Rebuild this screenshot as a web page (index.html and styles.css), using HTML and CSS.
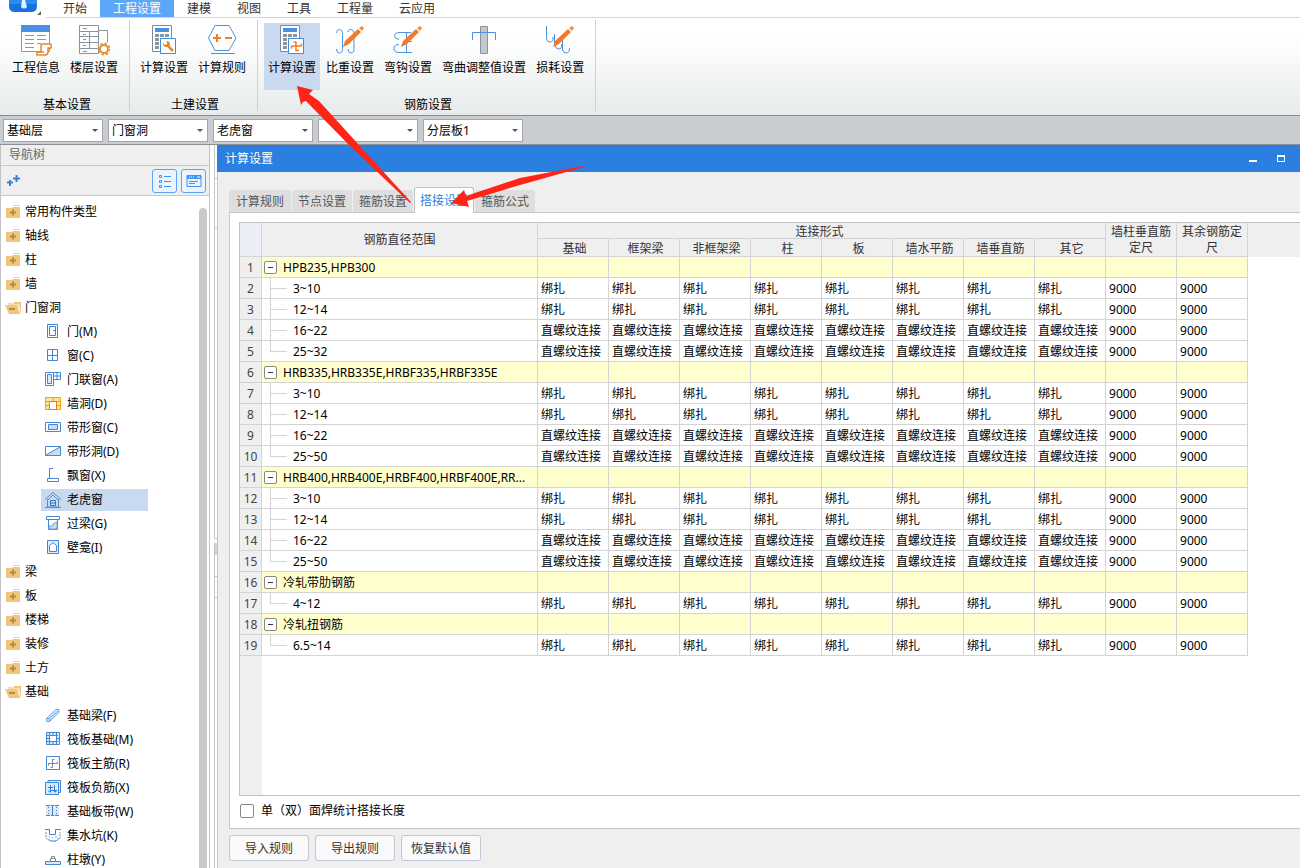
FILE: index.html
```html
<!DOCTYPE html>
<html lang="zh-CN">
<head>
<meta charset="utf-8">
<title>计算设置</title>
<link rel="stylesheet" href="styles.css">
</head>
<body>
<svg class="defs" aria-hidden="true">
  <symbol id="folder" viewBox="0 0 16 16"><path d="M8 2l1-1h5l1 1z" fill="#efce8e"/><path d="M1 4h6l1-1h7v11H1z" fill="#eec67c"/><path d="M8 5.500v6M5 8.500h6" stroke="#b98c3c" stroke-width="2"/></symbol>
  <symbol id="folder-open" viewBox="0 0 16 16"><path d="M3 3h13v10l-2-6H3z" fill="#f6dfae"/><path d="M9 2h7v11h-1V4H9z" fill="#eec67c"/><path d="M0 5h12l3 9H4z" fill="#eec67c"/><path d="M4 9h6" stroke="#b98c3c" stroke-width="2"/></symbol>
  <symbol id="calc" viewBox="0 0 32 32"><path d="M4.500 1.500h19v26h-19z" fill="#fff" stroke="#7e8a97"/><path d="M7 4h14v4H7z" fill="#4a90e0"/><path d="M7 10h4v3H7zm5 0h4v3h-4zm5 0h4v3h-4zM7 14h4v3H7zm0 4h4v3H7zm0 4h4v3H7z" fill="#8894a0"/><path d="M12.500 14.500h15v15h-15z" fill="#fff" stroke="#3f8be0"/></symbol>
  <symbol id="pencil" viewBox="0 0 32 32"><path d="M9 23l2-6L24 5l3 3-12 12z" fill="#f07c28"/><path d="M25 4l3-2 2 2-2 3z" fill="#e59146"/></symbol>
</svg>

<header class="menubar">
  <div class="logo"><svg width="44" height="17" viewBox="0 0 44 17"><path d="M9 0h28v6q0 6-6 6H15q-6 0-6-6z" fill="#1673dc"/><path d="M9 0h28v4H9z" fill="#2c8cec"/><path d="M22 0h3l2 7q-3 3-6 0z" fill="#e2f1ff"/><path d="M41 11v4h-4z" fill="#666"/></svg></div>
  <nav class="menu">
    <a href="#">开始</a><a href="#" class="active">工程设置</a><a href="#">建模</a><a href="#">视图</a><a href="#">工具</a><a href="#">工程量</a><a href="#">云应用</a>
  </nav>
</header>

<section class="ribbon">
  <div class="group">
    <div class="tools">
      <button class="tool"><svg width="32" height="32"><path d="M1.500 1.500h28v26h-28z" fill="#fff" stroke="#8b97a4"/><path d="M1 1h29v7H1z" fill="#4a90e4"/><path d="M5 11.500h9m3 0h9M5 15.500h9m3 0h9M5 19.500h9m3 0h4M5 23.500h9" stroke="#8b97a4"/><path d="M22 20h9v4h-3v4q0 3-3 3h-8v-3h4v-6q0-2 2-2z" fill="#fff" stroke="#e68a2e" stroke-width="1.500"/><path d="M17 28h7" stroke="#e68a2e" stroke-width="1.500"/></svg>工程信息</button>
      <button class="tool"><svg width="32" height="32"><path d="M20 6.500h9.500v12M1.500 1.500h19v28h-19zM1.500 7.500h19M1.500 12.500h19M1.500 18.500h19M1.500 24.500h19M11.500 7v17" fill="none" stroke="#8894a0"/><path d="M5 4.500h4M5 10.500h3M5 15.500h3M5 21.500h3M5 27.500h4" stroke="#8894a0"/><circle cx="26" cy="25" r="4" fill="#fff" stroke="#e6913c" stroke-width="2"/><circle cx="26" cy="25" r="5.500" fill="none" stroke="#e6913c" stroke-width="2" stroke-dasharray="2.300 2"/></svg>楼层设置</button>
    </div>
    <h2>基本设置</h2>
  </div>
  <div class="group">
    <div class="tools">
      <button class="tool"><svg width="32" height="32"><use href="#calc"/><path d="M19 21l6 6" stroke="#e68a2e" stroke-width="2.500"/><path d="M15 19l2 2 2-1v-2l-1-1h2l2 2v2l-2 2h-3l-2-2z" fill="#e68a2e"/></svg>计算设置</button>
      <button class="tool"><svg width="32" height="32"><path d="M2.500 14L9 1.500h14L30 14l-7 12.500H9z" fill="#fff" stroke="#4a90e4"/><path d="M7 14h8M11 10v8M19 14h7" stroke="#f07c28" stroke-width="2"/><path d="M5 29.500h24" stroke="#4a90e4"/></svg>计算规则</button>
    </div>
    <h2>土建设置</h2>
  </div>
  <div class="group">
    <div class="tools">
      <button class="tool active"><svg width="32" height="32"><use href="#calc"/><path d="M20 17.500v9h3M15.500 22h10M15.500 22v2.500M25.500 22v-2.500M20 18h-2.500" stroke="#f07c28" stroke-width="1.500" fill="none"/></svg>计算设置</button>
      <button class="tool"><svg width="32" height="32"><path d="M2.500 9q0-3.500 3-3.500t3 5v14q0 4.500-3 4.500t-3-4M13.500 8q1-2.500 3-2.500 3.500 0 3.500 5v14q0 4.500-3 4.500t-3-4" fill="none" stroke="#4a90e4"/><use href="#pencil"/></svg>比重设置</button>
      <button class="tool"><svg width="32" height="32"><path d="M19 8.500H8q-5 0-5.500 3t4.500 4M18 28.500H7q-5 0-5-4t5-4M14.500 8v20M12 17.500h8M12 28.500h8" fill="none" stroke="#4a90e4"/><use href="#pencil"/></svg>弯钩设置</button>
      <button class="tool"><svg width="32" height="32"><path d="M12.500 2.500h7v27h-7z" fill="#c3c8cd" stroke="#8b949e"/><path d="M4.500 16V8.500h23V16" fill="none" stroke="#4a90e4"/></svg>弯曲调整值设置</button>
      <button class="tool"><svg width="32" height="32"><path d="M2.500 2v12q0 4 3.500 4t3-5M10.500 10v10q1 5 4 5 4 0 3-5M18.500 16v10q1 3 4 3t3-5" fill="none" stroke="#4a90e4"/><use href="#pencil"/></svg>损耗设置</button>
    </div>
    <h2>钢筋设置</h2>
  </div>
</section>

<section class="filters">
  <label><select aria-label="楼层"><option>基础层</option></select></label>
  <label><select aria-label="构件类别"><option>门窗洞</option></select></label>
  <label><select aria-label="构件"><option>老虎窗</option></select></label>
  <label><select aria-label="名称"><option></option></select></label>
  <label><select aria-label="分层"><option>分层板1</option></select></label>
</section>

<main class="workspace">
  <aside class="sidebar">
    <h2 class="side-title">导航树</h2>
    <div class="side-tools">
      <button class="plain" aria-label="展开"><svg width="13" height="12"><path d="M0 7.500h6M3 5v6M6 3.500h7M9.500 0v7" stroke="#3b82d6" stroke-width="2"/></svg></button>
      <div class="views">
        <button class="view" aria-label="列表"><svg width="14" height="14"><path d="M1.500 1.500h2v2h-2zm0 5h2v2h-2zm0 5h2v2h-2zM6 2.500h7M6 7.500h7M6 12.500h7" fill="none" stroke="#3f95f0"/></svg></button>
        <button class="view" aria-label="卡片"><svg width="16" height="14"><path d="M1 1.500h14v11H1z" fill="none" stroke="#3f95f0"/><path d="M1 1h14v4H1z" fill="#3f95f0"/><path d="M3 3h1m1 0h1m1 0h1m3 0h3" stroke="#fff"/><path d="M3 7.500h9M3 9.500h6" stroke="#3f95f0"/></svg></button>
      </div>
    </div>
    <div class="side-body">
      <ul class="tree">
        <li><a href="#"><svg><use href="#folder"/></svg>常用构件类型</a></li>
        <li><a href="#"><svg><use href="#folder"/></svg>轴线</a></li>
        <li><a href="#"><svg><use href="#folder"/></svg>柱</a></li>
        <li><a href="#"><svg><use href="#folder"/></svg>墙</a></li>
        <li><a href="#"><svg><use href="#folder-open"/></svg>门窗洞</a>
          <ul>
            <li><a href="#"><svg><path d="M2.500.500h10v13h-10z"/><path d="M4.500 2.500h6v9h-6z"/><path d="M8 6.500h2"/></svg>门(M)</a></li>
            <li><a href="#"><svg><path d="M2.500 1.500h10v11h-10zM7.500 1v11M2 7.500h11"/></svg>窗(C)</a></li>
            <li><a href="#"><svg><path d="M.5.500h8v13h-8z"/><path d="M2.500 2.500h4v9h-4z" fill="#dce8f8"/><path d="M8.500.500h7v7h-7M12 1v7M8 4h8"/></svg>门联窗(A)</a></li>
            <li><a href="#"><svg><path d="M.5 1.500h15v12H.5z" fill="#fde392" stroke="#f2a900"/><path d="M1 5.500h14M1 9.500h14M8 2v3" stroke="#f2a900"/><path d="M4.500 5.500h7v8h-7z" fill="#fff" stroke="#e87b28"/></svg>墙洞(D)</a></li>
            <li><a href="#"><svg><path d="M.5 2.500h15v9H.5z"/><path d="M3.500 4.500h9v5h-9z" fill="#c8ddf6"/></svg>带形窗(C)</a></li>
            <li><a href="#"><svg><path d="M15 3v8H1z" fill="#c8ddf6" stroke="none"/><path d="M.5 2.500h15v9H.5zM1 11L15 3"/></svg>带形洞(D)</a></li>
            <li><a href="#"><svg><path d="M8 .5H4.500v10M2.500 10.500h11v3h-11z"/></svg>飘窗(X)</a></li>
            <li><a href="#" class="selected"><svg><path d="M0 7.500L8 .5l8 7M2.500 7v8h11V7M0 15.500h16" stroke="#5e8db8"/><path d="M3 8l5-5 5 5" stroke="#5e8db8"/><path d="M5.500 8.500h5v5h-5zM6 11h4" stroke="#2579d6"/></svg>老虎窗</a></li>
            <li><a href="#"><svg><path d="M1.500.500h13v3h-13zM3.500 4v9.500h9V4"/><path d="M4 13v-3h4V8l4-2v7z" fill="#c8ddf6" stroke="#6aa3e3"/></svg>过梁(G)</a></li>
            <li><a href="#"><svg><path d="M2.500.500h11v13h-11z" fill="#e5eefb"/><path d="M4.500 11.500v-6l3.500-3 3.500 3v6z" fill="#fff"/></svg>壁龛(I)</a></li>
          </ul>
        </li>
        <li><a href="#"><svg><use href="#folder"/></svg>梁</a></li>
        <li><a href="#"><svg><use href="#folder"/></svg>板</a></li>
        <li><a href="#"><svg><use href="#folder"/></svg>楼梯</a></li>
        <li><a href="#"><svg><use href="#folder"/></svg>装修</a></li>
        <li><a href="#"><svg><use href="#folder"/></svg>土方</a></li>
        <li><a href="#"><svg><use href="#folder-open"/></svg>基础</a>
          <ul>
            <li><a href="#"><svg><path d="M1.500 10.500L11 1.500h3v3l-9.500 9h-3z" fill="#dce8f8" stroke="#6aa3e3"/><path d="M1.500 10.500h3v3M4.500 10.500L13 3" stroke="#6aa3e3"/></svg>基础梁(F)</a></li>
            <li><a href="#"><svg><path d="M1.500.500h13v12h-13z" fill="#dce8f8"/><path d="M4.500 3.500h7v6h-7z" fill="#fff"/><path d="M2 3.500h12M2 9.500h12M4.500 1v11M11.500 1v11M8 1v2m0 7v2M2 6.500h2m8 0h2" stroke-dasharray="2 1"/></svg>筏板基础(M)</a></li>
            <li><a href="#"><svg><path d="M1.500.500h13v13h-13z"/><path d="M7.500 3v8.500M4 7.500h9M7.500 3.500h2M7.500 11.500h-2M3.500 7v2.500M12.500 8V5.500" stroke="#7d8b98"/></svg>筏板主筋(R)</a></li>
            <li><a href="#"><svg><path d="M3 2.500V.500h12.500v12h-2M.5 2.500h13v12H.5z" fill="#dce8f8"/><path d="M5.500 5v7q-2 0-2-1.500M9.500 5v7M3 7.500h5M6 10.500h6M9.500 12q2 0 2-1.500" stroke="#2d7edb"/></svg>筏板负筋(X)</a></li>
            <li><a href="#"><svg><path d="M1 1h13v11H1z" fill="#dce8f8" stroke="none"/><path d="M1 1.500h4m1 0h3m1 0h4M1 11.500h4m1 0h3m1 0h4M7.500 1v10"/><path d="M3.500 3v7M11.500 3v7" stroke-dasharray="1 2"/></svg>基础板带(W)</a></li>
            <li><a href="#"><svg><path d="M0 1.500h4.500v5h6v-5H16"/><path d="M1 4v6l4 3h6l4-3V4" stroke-dasharray="2 1" stroke="#7d8b98"/><path d="M3 11l3 2h5l3-3M4 9h1m2 1h1m2-1h2" stroke="#6aa3e3"/></svg>集水坑(K)</a></li>
            <li><a href="#"><svg><path d="M.5 9.500h15v3H.5z" fill="#dce8f8"/><path d="M5.500 9V6.500h5V9M6.500 6V4.500h3V6" stroke="#7d8b98"/></svg>柱墩(Y)</a></li>
          </ul>
        </li>
      </ul>
      <div class="scrollbar"></div>
    </div>
  </aside>
  <div class="gutter"></div>

  <section class="dialog">
    <header class="dialog-title">
      <h1>计算设置</h1>
      <div class="window-buttons">
        <button aria-label="最小化"><svg width="8" height="8"><path d="M0 6h8" stroke="#fff" stroke-width="2"/></svg></button>
        <button aria-label="最大化"><svg width="8" height="8"><path d="M.5 1v5.500h7V1" fill="none" stroke="#fff"/><path d="M0 1h8" stroke="#fff" stroke-width="2"/></svg></button>
      </div>
    </header>
    <div class="dialog-body">
      <div class="tabs" role="tablist">
        <button role="tab">计算规则</button><button role="tab">节点设置</button><button role="tab">箍筋设置</button><button role="tab" class="active" aria-selected="true">搭接设置</button><button role="tab">箍筋公式</button>
      </div>
      <div class="panel">
        <div class="grid">
          <table>
            <colgroup><col class="c-num"><col class="c-name"><col class="c-val" span="10"><col></colgroup>
            <thead>
              <tr class="upper"><th rowspan="2" class="corner"><th rowspan="2">钢筋直径范围<th colspan="8" class="short">连接形式<th rowspan="2">墙柱垂直筋定尺<th rowspan="2">其余钢筋定尺<th rowspan="2" class="filler">
              <tr class="lower"><th>基础<th>框架梁<th>非框架梁<th>柱<th>板<th>墙水平筋<th>墙垂直筋<th>其它
            </thead>
            <tbody>
              <tr class="head"><th>1<td><button class="toggle" aria-label="折叠"></button>HPB235,HPB300<td><td><td><td><td><td><td><td><td><td>
              <tr><th>2<td class="leaf">3~10<td>绑扎<td>绑扎<td>绑扎<td>绑扎<td>绑扎<td>绑扎<td>绑扎<td>绑扎<td>9000<td>9000
              <tr><th>3<td class="leaf">12~14<td>绑扎<td>绑扎<td>绑扎<td>绑扎<td>绑扎<td>绑扎<td>绑扎<td>绑扎<td>9000<td>9000
              <tr><th>4<td class="leaf">16~22<td>直螺纹连接<td>直螺纹连接<td>直螺纹连接<td>直螺纹连接<td>直螺纹连接<td>直螺纹连接<td>直螺纹连接<td>直螺纹连接<td>9000<td>9000
              <tr><th>5<td class="leaf last">25~32<td>直螺纹连接<td>直螺纹连接<td>直螺纹连接<td>直螺纹连接<td>直螺纹连接<td>直螺纹连接<td>直螺纹连接<td>直螺纹连接<td>9000<td>9000
              <tr class="head"><th>6<td><button class="toggle" aria-label="折叠"></button>HRB335,HRB335E,HRBF335,HRBF335E<td><td><td><td><td><td><td><td><td><td>
              <tr><th>7<td class="leaf">3~10<td>绑扎<td>绑扎<td>绑扎<td>绑扎<td>绑扎<td>绑扎<td>绑扎<td>绑扎<td>9000<td>9000
              <tr><th>8<td class="leaf">12~14<td>绑扎<td>绑扎<td>绑扎<td>绑扎<td>绑扎<td>绑扎<td>绑扎<td>绑扎<td>9000<td>9000
              <tr><th>9<td class="leaf">16~22<td>直螺纹连接<td>直螺纹连接<td>直螺纹连接<td>直螺纹连接<td>直螺纹连接<td>直螺纹连接<td>直螺纹连接<td>直螺纹连接<td>9000<td>9000
              <tr><th>10<td class="leaf last">25~50<td>直螺纹连接<td>直螺纹连接<td>直螺纹连接<td>直螺纹连接<td>直螺纹连接<td>直螺纹连接<td>直螺纹连接<td>直螺纹连接<td>9000<td>9000
              <tr class="head"><th>11<td><button class="toggle" aria-label="折叠"></button>HRB400,HRB400E,HRBF400,HRBF400E,RR...<td><td><td><td><td><td><td><td><td><td>
              <tr><th>12<td class="leaf">3~10<td>绑扎<td>绑扎<td>绑扎<td>绑扎<td>绑扎<td>绑扎<td>绑扎<td>绑扎<td>9000<td>9000
              <tr><th>13<td class="leaf">12~14<td>绑扎<td>绑扎<td>绑扎<td>绑扎<td>绑扎<td>绑扎<td>绑扎<td>绑扎<td>9000<td>9000
              <tr><th>14<td class="leaf">16~22<td>直螺纹连接<td>直螺纹连接<td>直螺纹连接<td>直螺纹连接<td>直螺纹连接<td>直螺纹连接<td>直螺纹连接<td>直螺纹连接<td>9000<td>9000
              <tr><th>15<td class="leaf last">25~50<td>直螺纹连接<td>直螺纹连接<td>直螺纹连接<td>直螺纹连接<td>直螺纹连接<td>直螺纹连接<td>直螺纹连接<td>直螺纹连接<td>9000<td>9000
              <tr class="head"><th>16<td><button class="toggle" aria-label="折叠"></button>冷轧带肋钢筋<td><td><td><td><td><td><td><td><td><td>
              <tr><th>17<td class="leaf last">4~12<td>绑扎<td>绑扎<td>绑扎<td>绑扎<td>绑扎<td>绑扎<td>绑扎<td>绑扎<td>9000<td>9000
              <tr class="head"><th>18<td><button class="toggle" aria-label="折叠"></button>冷轧扭钢筋<td><td><td><td><td><td><td><td><td><td>
              <tr><th>19<td class="leaf last">6.5~14<td>绑扎<td>绑扎<td>绑扎<td>绑扎<td>绑扎<td>绑扎<td>绑扎<td>绑扎<td>9000<td>9000
            </tbody>
          </table>
        </div>
        <label class="option"><input type="checkbox">单（双）面焊统计搭接长度</label>
      </div>
      <footer class="actions">
        <button>导入规则</button><button>导出规则</button><button>恢复默认值</button>
      </footer>
    </div>
  </section>
</main>

<svg class="annotations" width="600" height="220" aria-hidden="true"><path d="M297 86l16 4-4 4 10 7 40 44 52 57-1 1-61-58-43-44-3 1-2 3z"/><path d="M451 203l13-13 2 6 54-18 63-12 1 1-64 18-53 16 2 6z"/></svg>
</body>
</html>
```

FILE: styles.css
```css
* { box-sizing: border-box; }

body {
  display: flex;
  flex-direction: column;
  height: 100vh;
  margin: 0;
  overflow: hidden;
  background: #fff;
  color: #000;
  font: 12px/16px "Noto Sans", "Noto Sans CJK SC", sans-serif;
}

h1, h2 { margin: 0; font-size: 12px; font-weight: 400; }
a { color: inherit; text-decoration: none; }
button, select, input { font: inherit; color: inherit; }
button { padding: 0; border: 0; background: none; white-space: nowrap; }
svg { display: block; flex: none; }
.defs { display: none; }

.menubar { display: flex; flex: none; height: 18px; }
.logo { width: 46px; }
.menu { display: flex; flex: 1; padding-left: 4px; border-bottom: 1px solid #d2d4d6; color: #333; }
.menu a { height: 17px; padding: 1px 13px 0; }
.menu .active { background: #5ba8f8; color: #fff; }

.ribbon {
  display: flex;
  flex: none;
  height: 98px;
  padding: 2px 0 4px;
  border-bottom: 1px solid #878c92;
  background: linear-gradient(#fff 20%, #e7ebeb);
}
.group {
  display: flex;
  flex-direction: column;
  justify-content: space-between;
  padding: 3px 7px 0 6px;
  border-right: 1px solid #cfd2d4;
}
.group:first-child { padding-left: 8px; }
.group h2 { padding-left: 4px; line-height: 12px; text-align: center; }
.tools { display: flex; gap: 2px; }
.tool {
  display: flex;
  flex-direction: column;
  align-items: center;
  gap: 4px;
  height: 67px;
  padding: 1px 4px 0;
}
.tool.active { background: #c9d9ef; }

.filters {
  display: flex;
  flex: none;
  gap: 5px;
  height: 29px;
  padding: 3px 3px 2px;
  border-bottom: 1px solid #8c9095;
  background: #c9ccd1;
}
.filters label { position: relative; width: 100px; }
.filters label::after {
  content: "";
  position: absolute;
  right: 5px;
  top: 10px;
  border: 3px solid transparent;
  border-top-color: #555;
  border-bottom: 0;
  pointer-events: none;
}
.filters select {
  width: 100%;
  height: 23px;
  padding: 0 3px;
  border: 1px solid #a4a6a9;
  border-radius: 0;
  background: #fff;
  appearance: none;
}

.workspace { display: flex; flex: 1; min-height: 0; }

.sidebar {
  display: flex;
  flex-direction: column;
  flex: none;
  width: 210px;
  border: solid #c0c3c8;
  border-width: 0 1px;
}
.side-title {
  height: 21px;
  padding: 2px 8px;
  border-bottom: 1px solid #c6c8cc;
  background: #efefef;
  color: #666;
}
.side-tools {
  display: flex;
  justify-content: space-between;
  height: 30px;
  padding: 3px 3px 0 6px;
  border-bottom: 1px solid #c6c8cc;
  background: #efefef;
}
.plain { display: flex; padding-top: 6px; }
.views { display: flex; gap: 4px; }
.view {
  display: grid;
  place-items: center;
  width: 25px;
  height: 24px;
  border: 1px solid #58a5f5;
  border-radius: 3px;
  background: #eaf3fe;
}
.side-body { display: flex; flex: 1; min-height: 0; overflow: hidden; }
.scrollbar { flex: none; width: 8px; margin: 12px 2px 0 0; border-radius: 4px 4px 0 0; background: #c9c9c9; }
.tree { flex: 1; padding: 4px 0 0 4px; }
.tree, .tree ul { margin: 0; list-style: none; }
.tree ul { padding: 0 0 0 36px; }
.tree a { display: flex; align-items: center; gap: 4px; height: 24px; }
.tree svg { width: 16px; height: 16px; fill: none; stroke: #3f86d8; }
.tree use { stroke: none; }
.tree ul a { gap: 6px; width: 107px; height: 22px; margin: 1px 0; padding: 0 4px; white-space: nowrap; }
.tree ul li { display: flow-root; }
.tree .selected { background: #c9d9ef; }

.gutter {
  flex: none;
  width: 7px;
  background:
    linear-gradient(#c4c6ca, #c4c6ca) 4px 0 / 1px 394px no-repeat,
    linear-gradient(#c4c6ca, #c4c6ca) 4px 398px / 1px 100% no-repeat,
    linear-gradient(#c4c6ca, #c4c6ca) 4px 393px / 3px 1px no-repeat,
    linear-gradient(#d0d2d8, #d0d2d8) 4px 398px / 3px 12px no-repeat,
    linear-gradient(#c4c6ca, #c4c6ca) 4px 33px / 3px 1px no-repeat,
    linear-gradient(#c4c6ca, #c4c6ca) 4px 82px / 3px 1px no-repeat,
    linear-gradient(#c4c6ca, #c4c6ca) 4px 431px / 3px 1px no-repeat,
    linear-gradient(#c4c6ca, #c4c6ca) 4px 452px / 3px 1px no-repeat,
    #fff;
}

.dialog { display: flex; flex: 1; flex-direction: column; min-width: 0; background: #efefef; }
.dialog-title {
  display: flex;
  justify-content: space-between;
  align-items: center;
  height: 27px;
  padding: 0 15px 0 8px;
  background: #2b7fe1;
  color: #fff;
}
.window-buttons { display: flex; gap: 20px; }
.dialog-body {
  display: flex;
  flex: 1;
  flex-direction: column;
  min-height: 0;
  padding: 15px 0 0 11px;
  border-left: 1px solid #c3c5c8;
}
.tabs { display: flex; align-items: flex-end; flex: none; gap: 1px; height: 25px; }
.tabs button { height: 22px; padding: 2px 6px 0; border-radius: 3px 3px 0 0; background: #dedede; color: #555; }
.tabs button:first-child { padding: 2px 7px 0; }
.tabs .active {
  height: 26px;
  margin-bottom: -1px;
  padding: 0 5px;
  border: 1px solid #bfc3c9;
  border-bottom: 0;
  background: #fff;
  color: #2b7fe1;
  z-index: 1;
}
.panel {
  display: flex;
  flex: 1;
  flex-direction: column;
  min-height: 0;
  padding: 9px 0 0 9px;
  border: solid #c3c6ca;
  border-width: 1px 0 1px 1px;
  background: #fff;
}
.grid {
  flex: 1;
  min-height: 0;
  overflow: hidden;
  border: solid #bfc2c6;
  border-width: 1px 0 1px 1px;
  background: linear-gradient(to right, #efefef 22px, #fff 22px);
}
table { width: 100%; border-collapse: separate; border-spacing: 0; table-layout: fixed; }
.c-num { width: 22px; }
.c-name { width: 276px; }
.c-val { width: 71px; }
th, td {
  height: 21px;
  padding: 2px 3px 0;
  border: solid #d4d4d4;
  border-width: 0 1px 1px 0;
  font-weight: 400;
  text-align: left;
  white-space: nowrap;
}
th { background: #efefef; color: #333; text-align: center; }
thead th { padding: 1px 4px 0; white-space: normal; }
.upper th { height: 34px; }
.upper .short { height: 16px; padding: 2px 6px 0 2px; line-height: 13px; }
.lower th { height: 18px; padding: 2px 2px 0 5px; line-height: 15px; }
tbody th { padding: 2px 0 0; color: #444; }
thead .corner { background: #ebeff5; }
thead .filler { border: 0; }
.head td { background: #ffffcd; }
td.leaf {
  padding-left: 31px;
  background:
    linear-gradient(#d4d4d4, #d4d4d4) 8px 0 / 1px 100% no-repeat,
    linear-gradient(#d4d4d4, #d4d4d4) 8px 10px / 17px 1px no-repeat;
}
td.last {
  background:
    linear-gradient(#d4d4d4, #d4d4d4) 8px 0 / 1px 10px no-repeat,
    linear-gradient(#d4d4d4, #d4d4d4) 8px 10px / 17px 1px no-repeat;
}
.head td:nth-child(2) { padding-left: 2px; }
.toggle {
  width: 13px;
  height: 13px;
  margin-right: 6px;
  border: 1px solid #888;
  border-radius: 2px;
  background: linear-gradient(#333, #333) center / 5px 1px no-repeat #fff;
  vertical-align: -1px;
}

.option { display: flex; align-items: center; gap: 7px; height: 32px; padding-bottom: 3px; }
.option input {
  width: 14px;
  height: 14px;
  margin: 0 0 0 1px;
  border: 1px solid #888;
  border-radius: 2px;
  background: #fff;
  appearance: none;
}
.actions { display: flex; flex: none; gap: 6px; padding: 6px 0 7px; }
.actions button {
  width: 80px;
  height: 26px;
  padding-top: 2px;
  border: 1px solid #bec7d6;
  border-radius: 3px;
  background: #fafafa;
  color: #333;
}

.annotations { position: absolute; left: 0; top: 0; z-index: 2; fill: #ff2416; pointer-events: none; }
```
